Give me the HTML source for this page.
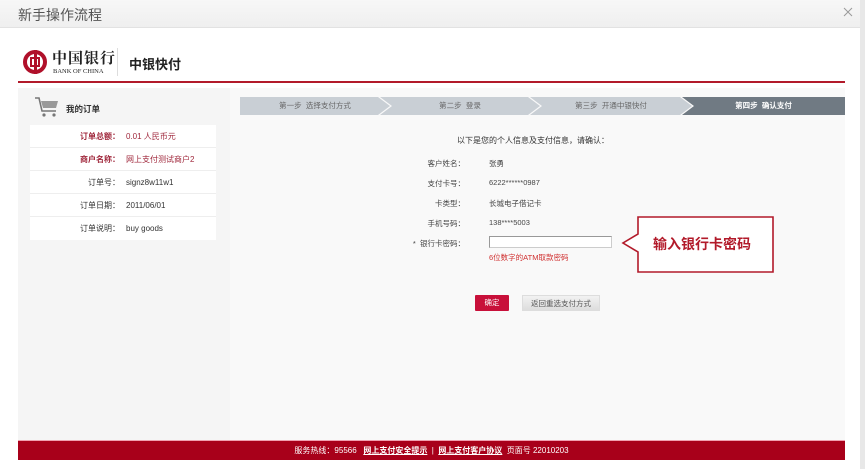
<!DOCTYPE html>
<html><head><meta charset="utf-8"><style>
*{margin:0;padding:0;box-sizing:border-box}
body{width:865px;height:469px;overflow:hidden;background:#fff;font-family:"Liberation Sans","Noto Sans CJK SC",sans-serif;position:relative;color:#333}
.a{position:absolute}
.title{left:0;top:0;width:860px;height:28px;background:linear-gradient(#f7f7f7,#efefef);border-bottom:1px solid #e2e2e2}
.title span{position:absolute;left:18px;top:5px;font-size:14px;color:#555}
.strip{left:860px;top:0;width:5px;height:469px;background:#e8e8e8}
.lt{font-size:8px;color:#333}
.step{top:97px;height:18px;font-size:7.5px;color:#666;line-height:18px;text-align:center}
.row{left:30px;width:186px;height:23px;border-bottom:1px solid #eee;font-size:8px;line-height:23px}
.row b{display:inline-block;width:90px;text-align:right;font-weight:normal}
.row i{font-style:normal;margin-left:6px}
.lab{width:235px;text-align:right;font-size:7.5px;color:#444;left:230px}
.val{left:489px;font-size:7.5px;color:#444}
</style></head><body>
<div class="a title"><span>新手操作流程</span></div>
<svg class="a" style="left:843px;top:7px" width="10" height="10"><path d="M1 1L9 9M9 1L1 9" stroke="#999" stroke-width="1"/></svg>
<div class="a strip"></div>
<!-- logo -->
<div class="a" style="left:23px;top:50px;width:24px;height:24px;border-radius:50%;border:4px solid #b0102a"></div>
<div class="a" style="left:30px;top:57px;width:10px;height:10px;border:2.5px solid #b0102a"></div>
<div class="a" style="left:34px;top:50px;width:2.5px;height:24px;background:#b0102a"></div>
<div class="a" style="left:52px;top:47px;font-size:15px;font-family:'Noto Serif CJK SC',serif;font-weight:bold;color:#222;letter-spacing:1px">中国银行</div>
<div class="a" style="left:53px;top:68px;font-size:6.5px;font-family:'Liberation Serif',serif;color:#222">BANK OF CHINA</div>
<div class="a" style="left:117px;top:48px;width:1px;height:28px;background:#ddd"></div>
<div class="a" style="left:129px;top:54px;font-size:13px;font-weight:bold;color:#222">中银快付</div>
<div class="a" style="left:18px;top:81px;width:827px;height:2px;background:#b21a2a"></div>
<!-- left panel -->
<div class="a" style="left:18px;top:88px;width:212px;height:352px;background:#f5f5f5"></div>
<div class="a" style="left:230px;top:88px;width:615px;height:352px;background:#f9f9f9"></div>
<svg class="a" style="left:34px;top:96px" width="26" height="22"><path d="M1 2H5L8 15H22" stroke="#777" stroke-width="1.6" fill="none"/><path d="M7 5H24L22 12H9Z" fill="#999"/><circle cx="10" cy="19" r="1.6" fill="#777"/><circle cx="20" cy="19" r="1.6" fill="#777"/></svg>
<div class="a" style="left:66px;top:103px;font-size:8.5px;font-weight:bold;color:#333">我的订单</div>
<div class="a" style="left:30px;top:125px;width:186px;height:115px;background:#fff"></div>
<div class="a row" style="top:125px;color:#a0283c"><b style="font-weight:bold">订单总额：</b><i>0.01 人民币元</i></div>
<div class="a row" style="top:148px;color:#a0283c"><b style="font-weight:bold">商户名称：</b><i>网上支付测试商户2</i></div>
<div class="a row" style="top:171px"><b>订单号：</b><i>signz8w11w1</i></div>
<div class="a row" style="top:194px"><b>订单日期：</b><i>2011/06/01</i></div>
<div class="a row" style="top:217px;border:0"><b>订单说明：</b><i>buy goods</i></div>
<!-- steps -->
<div class="a step" style="left:240px;width:150px;background:#c9cfd5;clip-path:polygon(0 0,138px 0,150px 50%,138px 100%,0 100%)">第一步&nbsp; 选择支付方式</div>
<div class="a step" style="left:380px;width:160px;background:#c9cfd5;clip-path:polygon(0 0,148px 0,160px 50%,148px 100%,0 100%,12px 50%)">第二步&nbsp; 登录</div>
<div class="a step" style="left:530px;width:162px;background:#c9cfd5;clip-path:polygon(0 0,150px 0,162px 50%,150px 100%,0 100%,12px 50%)">第三步&nbsp; 开通中银快付</div>
<div class="a step" style="left:682px;width:163px;background:#707a83;color:#fff;font-weight:bold;clip-path:polygon(0 0,163px 0,163px 100%,0 100%,12px 50%)">第四步&nbsp; 确认支付</div>
<div class="a lt" style="left:433px;top:135px;width:200px;text-align:center">以下是您的个人信息及支付信息，请确认：</div>
<div class="a lab" style="top:158px">客户姓名：</div><div class="a val" style="top:158px">张勇</div>
<div class="a lab" style="top:178px">支付卡号：</div><div class="a val" style="top:178px">6222******0987</div>
<div class="a lab" style="top:198px">卡类型：</div><div class="a val" style="top:198px">长城电子借记卡</div>
<div class="a lab" style="top:218px">手机号码：</div><div class="a val" style="top:218px">138****5003</div>
<div class="a lab" style="top:238px">*&nbsp; 银行卡密码：</div>
<div class="a" style="left:489px;top:236px;width:123px;height:12px;background:#fff;border:1px solid #999;border-bottom-color:#ccc;border-right-color:#ccc"></div>
<div class="a" style="left:489px;top:252px;font-size:7.5px;color:#d03030">6位数字的ATM取款密码</div>
<svg class="a" style="left:618px;top:216px" width="158" height="58"><path d="M20 1H155V56H20V36L5 27L20 18Z" fill="#fff" stroke="#b21a2a" stroke-width="1.6"/></svg>
<div class="a" style="left:653px;top:234px;font-size:14px;font-weight:bold;color:#b21a2a">输入银行卡密码</div>
<div class="a" style="left:475px;top:295px;width:34px;height:16px;background:#c8103a;color:#fff;font-size:7.5px;text-align:center;line-height:16px;border-radius:1px">确定</div>
<div class="a" style="left:522px;top:295px;width:78px;height:16px;background:linear-gradient(#f2f2f2,#ddd);color:#555;font-size:7.5px;text-align:center;line-height:16px;border:1px solid #ddd">返回重选支付方式</div>
<!-- footer -->
<div class="a" style="left:18px;top:440px;width:827px;height:20px;background:#a8001a;border-top:1px solid #f0a0b0;color:#fff;font-size:8px;text-align:center;line-height:20px">服务热线：95566&nbsp;&nbsp; <u style="font-weight:bold">网上支付安全提示</u>&nbsp;&nbsp;|&nbsp;&nbsp;<u style="font-weight:bold">网上支付客户协议</u>&nbsp;&nbsp;页面号 22010203</div>
</body></html>
